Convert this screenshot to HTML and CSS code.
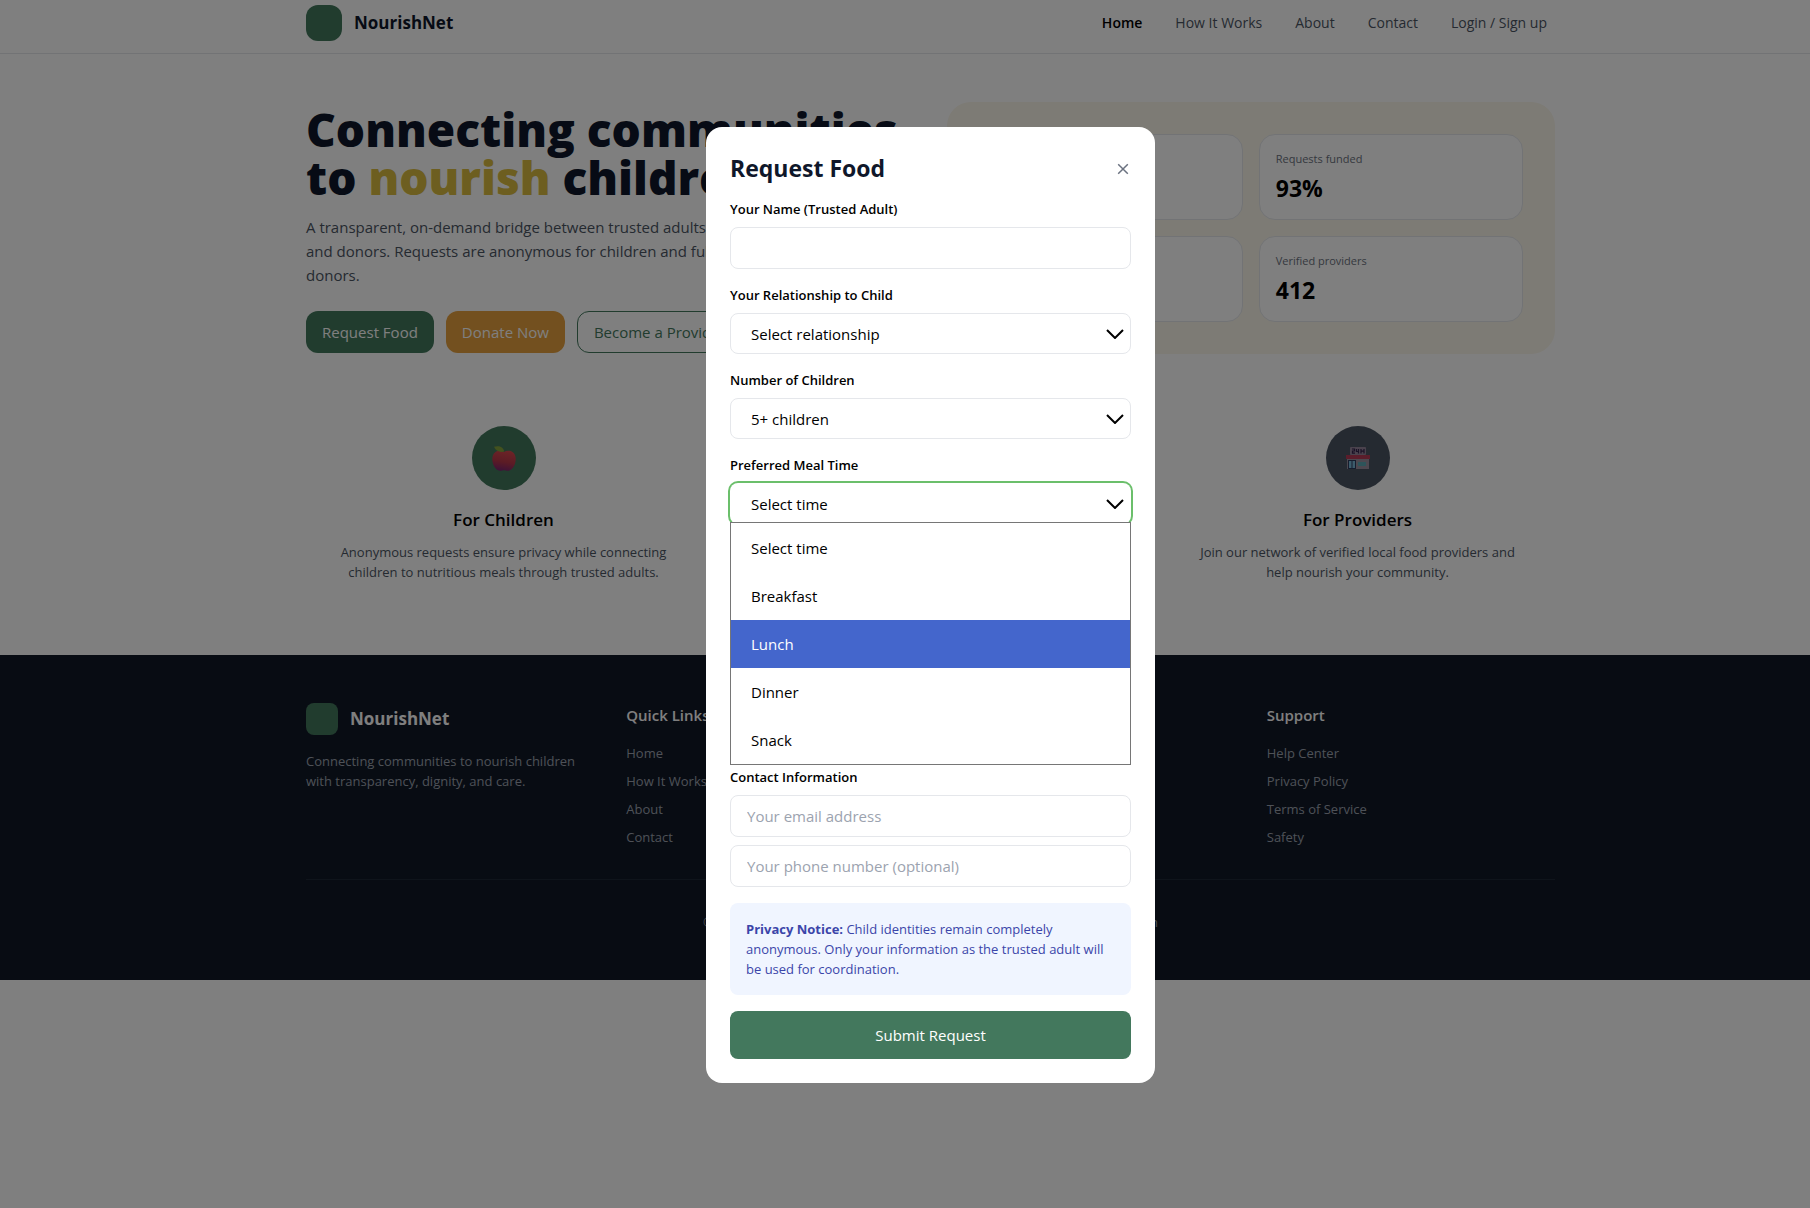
FILE: index.html
```html
<!DOCTYPE html>
<html lang="en">
<head>
<meta charset="utf-8">
<meta name="viewport" content="width=device-width, initial-scale=1">
<title>NourishNet</title>
<link rel="stylesheet" href="styles.css">
</head>
<body>
<header class="site-header">
  <div class="container header-row">
    <a class="brand" href="#"><span class="brand-mark"></span>NourishNet</a>
    <nav class="main-nav">
      <a class="active" href="#">Home</a>
      <a href="#">How It Works</a>
      <a href="#">About</a>
      <a href="#">Contact</a>
      <a href="#">Login / Sign up</a>
    </nav>
  </div>
</header>

<main class="site-main">
  <div class="container">
    <section class="hero">
      <div class="hero-copy">
        <h1>Connecting communities<br>to <span class="accent">nourish</span> children</h1>
        <p>A transparent, on-demand bridge between trusted adults, providers,<br>and donors. Requests are anonymous for children and fulfilled by<br>donors.</p>
        <div class="actions">
          <button type="button" class="btn btn-green">Request Food</button>
          <button type="button" class="btn btn-amber">Donate Now</button>
          <button type="button" class="btn btn-outline">Become a Provider</button>
        </div>
      </div>
      <div class="stats">
        <div class="stat"></div>
        <div class="stat"><span class="stat-label">Requests funded</span><span class="stat-value">93%</span></div>
        <div class="stat"></div>
        <div class="stat"><span class="stat-label">Verified providers</span><span class="stat-value">412</span></div>
      </div>
    </section>

    <section class="features">
      <article class="feature">
        <div class="feature-icon green">
          <svg width="24" height="25" viewBox="0 0 24 25" aria-hidden="true">
            <defs>
              <linearGradient id="apple" x1="0.6" y1="0" x2="0.4" y2="1">
                <stop offset="0" stop-color="#d8484e"/><stop offset="0.55" stop-color="#b8384a"/><stop offset="1" stop-color="#7c2470"/>
              </linearGradient>
            </defs>
            <path d="M12 6C9.500 4.400 5.800 4.500 3.200 6.300C.5 8.300-.2 12.200.6 16C1.500 20.600 4.400 24.800 8.300 24.800C9.900 24.800 10.600 24.300 12 24.300C13.400 24.300 14.100 24.800 15.700 24.800C19.600 24.800 22.500 20.600 23.400 16C24.200 12.200 23.500 8.300 20.800 6.300C18.200 4.500 14.500 4.400 12 6Z" fill="url(#apple)"/>
            <path d="M2 .8C6.500-.6 11.300.4 12.200 5.600C7.600 6.800 3.800 5 2 .8Z" fill="#86a43c"/>
          </svg>
        </div>
        <h2>For Children</h2>
        <p>Anonymous requests ensure privacy while connecting children to nutritious meals through trusted adults.</p>
      </article>
      <article class="feature feature-last">
        <div class="feature-icon slate">
          <svg width="24" height="24" viewBox="0 0 24 24" aria-hidden="true">
            <rect x="4" y="1" width="16" height="8" rx="1" fill="#94849a"/>
            <path d="M6 3h2.500v2H6.500v2.200H9M10.500 3v2.500H13M12.500 3v4.500M15 3v4.500M18 3v4.500M15 5.200h3" fill="none" stroke="#35224c" stroke-width="1.200"/>
            <rect x="1" y="12" width="22" height="11" fill="#9a90a0"/>
            <rect x="0" y="9" width="24" height="4" fill="#b43a56"/>
            <rect x="2" y="14" width="8" height="9" fill="#2c3a5c"/>
            <path d="M3 15h2.500v7H3zM6.500 15H9v7H6.500z" fill="#78b8d8"/>
            <rect x="12" y="16" width="8" height="4" fill="#5ca8b4"/>
          </svg>
        </div>
        <h2>For Providers</h2>
        <p>Join our network of verified local food providers and help nourish your community.</p>
      </article>
    </section>
  </div>
</main>

<footer class="site-footer">
  <div class="container">
    <div class="footer-cols">
      <div>
        <a class="brand footer-brand" href="#"><span class="brand-mark"></span>NourishNet</a>
        <p>Connecting communities to nourish children with transparency, dignity, and care.</p>
      </div>
      <nav>
        <h3>Quick Links</h3>
        <a href="#">Home</a>
        <a href="#">How It Works</a>
        <a href="#">About</a>
        <a href="#">Contact</a>
      </nav>
      <nav class="footer-last">
        <h3>Support</h3>
        <a href="#">Help Center</a>
        <a href="#">Privacy Policy</a>
        <a href="#">Terms of Service</a>
        <a href="#">Safety</a>
      </nav>
    </div>
    <p class="copyright">© 2025 NourishNet. All rights reserved. Made with care for all your children</p>
  </div>
</footer>

<div class="overlay">
  <div class="modal" role="dialog" aria-modal="true" aria-labelledby="modal-title">
    <div class="modal-head">
      <h2 id="modal-title">Request Food</h2>
      <button type="button" class="close" aria-label="Close">
        <svg width="12" height="12" viewBox="0 0 12 12" aria-hidden="true"><path d="M1.200 1.200l9.600 9.600M10.800 1.200l-9.600 9.600"/></svg>
      </button>
    </div>
    <form>
      <div class="field">
        <label for="name">Your Name (Trusted Adult)</label>
        <input id="name" type="text">
      </div>
      <div class="field">
        <label for="relationship">Your Relationship to Child</label>
        <div class="select">
          <select id="relationship"><option>Select relationship</option></select>
          <svg width="18" height="10" viewBox="0 0 18 10" aria-hidden="true"><path d="M1 1l8 8 8-8"/></svg>
        </div>
      </div>
      <div class="field">
        <label for="children">Number of Children</label>
        <div class="select">
          <select id="children"><option>5+ children</option></select>
          <svg width="18" height="10" viewBox="0 0 18 10" aria-hidden="true"><path d="M1 1l8 8 8-8"/></svg>
        </div>
      </div>
      <div class="field field-open">
        <label for="meal">Preferred Meal Time</label>
        <div class="select">
          <select id="meal" aria-controls="meal-list"><option>Select time</option></select>
          <svg width="18" height="10" viewBox="0 0 18 10" aria-hidden="true"><path d="M1 1l8 8 8-8"/></svg>
        </div>
        <ul class="options" id="meal-list" role="listbox" aria-label="Preferred Meal Time">
          <li role="option">Select time</li>
          <li role="option">Breakfast</li>
          <li role="option" class="highlight" aria-selected="true">Lunch</li>
          <li role="option">Dinner</li>
          <li role="option">Snack</li>
        </ul>
      </div>
      <div class="field">
        <label for="email">Contact Information</label>
        <input id="email" type="email" placeholder="Your email address">
        <input id="phone" type="tel" placeholder="Your phone number (optional)" aria-label="Phone number">
      </div>
      <p class="notice"><strong>Privacy Notice:</strong> Child identities remain completely anonymous. Only your information as the trusted adult will be used for coordination.</p>
      <button type="submit" class="submit">Submit Request</button>
    </form>
  </div>
</div>
</body>
</html>
```
FILE: styles.css
```css
:root {
  --green: #43785d;
  --ink: #0f172a;
  --border: #e5e7eb;
  --page-shift: 51px;
}

* { box-sizing: border-box; }

body {
  margin: 0;
  background: #fff;
  color: #000;
  font-family: "Segoe UI", "Open Sans", "Noto Sans", sans-serif;
  font-size: 15px;
  line-height: 24px;
}

h1, h2, h3, p, ul { margin: 0; padding: 0; }
a { color: inherit; text-decoration: none; }
button, input, select { font: inherit; color: inherit; }

.site-header, .site-main, .site-footer { padding-left: var(--page-shift); }

.container {
  max-width: 1281px;
  margin: 0 auto;
  padding: 0 16px;
}

/* Header */
.site-header { border-bottom: 1px solid var(--border); }
.header-row {
  display: flex;
  align-items: center;
  justify-content: space-between;
  padding-top: 5px;
  padding-bottom: 12px;
}
.brand {
  display: flex;
  align-items: center;
  gap: 12px;
  color: var(--ink);
  font-size: 17px;
  font-weight: 700;
}
.brand-mark {
  width: 36px;
  height: 36px;
  border-radius: 12px;
  background: var(--green);
}
.main-nav {
  display: flex;
  gap: 33px;
  padding-right: 8px;
  color: #4b5563;
  font-size: 14px;
}
.main-nav .active { color: #000; font-weight: 600; }

/* Hero */
.site-main { padding-bottom: 49px; }
.hero {
  display: grid;
  grid-template-columns: 1fr 1fr;
  gap: 32px;
  align-items: center;
  padding: 48px 0;
}
h1 {
  padding-top: 2px;
  color: var(--ink);
  font-size: 46px;
  font-weight: 800;
  line-height: 48px;
  white-space: nowrap;
}
.accent { color: #dabc40; }
.hero-copy p { margin-top: 14px; color: #4b5563; }
.actions { display: flex; gap: 12px; margin-top: 24px; }
.btn {
  height: 42px;
  padding: 0 16px;
  border: 0;
  border-radius: 12px;
  color: #fff;
}
.btn-green { background: var(--green); }
.btn-amber { background: #e6a03e; }
.btn-outline { border: 1px solid var(--green); background: none; color: var(--green); }
.stats {
  display: grid;
  grid-template-columns: 1fr 1fr;
  grid-auto-rows: 86px;
  gap: 16px;
  padding: 32px;
  border-radius: 24px;
  background: #faf6ea;
}
.stat {
  display: flex;
  flex-direction: column;
  gap: 5px;
  padding: 16px;
  border: 1px solid var(--border);
  border-radius: 16px;
  background: #fff;
}
.stat-label { color: #6b7280; font-size: 11px; line-height: 16px; }
.stat-value { font-size: 23px; font-weight: 700; line-height: 32px; }

/* Features */
.features {
  display: grid;
  grid-template-columns: repeat(3, 1fr);
  gap: 32px;
}
.feature { padding: 24px 32px; text-align: center; }
.feature-last { grid-column: 3; }
.feature-icon {
  display: grid;
  place-items: center;
  width: 64px;
  height: 64px;
  margin: 0 auto 16px;
  border-radius: 50%;
}
.green { background: var(--green); }
.slate { background: #4b5563; }
.feature h2 { font-size: 17px; font-weight: 600; line-height: 28px; }
.feature p { margin-top: 8px; color: #4b5563; font-size: 13px; line-height: 20px; }

/* Footer */
.site-footer {
  padding-top: 48px;
  padding-bottom: 48px;
  background: #111827;
  color: #9ca3af;
  font-size: 13px;
  line-height: 20px;
}
.footer-cols {
  display: grid;
  grid-template-columns: repeat(4, 1fr);
  gap: 32px;
  padding-bottom: 32px;
  border-bottom: 1px solid #1f2937;
}
.footer-last { grid-column: 4; }
.footer-brand { margin-bottom: 16px; color: #fff; }
.footer-brand .brand-mark { width: 32px; height: 32px; border-radius: 8px; }
.footer-cols nav { display: flex; flex-direction: column; gap: 8px; }
.footer-cols h3 {
  margin-bottom: 8px;
  color: #fff;
  font-size: 15px;
  font-weight: 600;
  line-height: 24px;
}
.copyright { margin-top: 32px; text-align: center; }

/* Modal */
.overlay {
  position: fixed;
  inset: 0;
  display: flex;
  align-items: center;
  justify-content: center;
  padding: 2px 0 0 var(--page-shift);
  background: rgba(0, 0, 0, 0.5);
}
.modal {
  width: 100%;
  max-width: 449px;
  padding: 24px;
  border-radius: 16px;
  background: #fff;
}
.modal-head {
  display: flex;
  align-items: center;
  justify-content: space-between;
  margin-bottom: 14px;
}
.modal-head h2 { color: var(--ink); font-size: 23px; font-weight: 700; line-height: 34px; }
.close {
  display: flex;
  padding: 4px 2px 2px;
  border: 0;
  background: none;
}
.close path { stroke: #6b7280; stroke-width: 1.500; }

.field { display: flex; flex-direction: column; gap: 8px; }
.field + .field { margin-top: 16px; }
.field-open + .field { margin-top: 2px; }
.field label { font-size: 13px; font-weight: 600; line-height: 20px; }
.field input, .field select {
  width: 100%;
  height: 42px;
  padding: 0 16px;
  border: 1px solid var(--border);
  border-radius: 8px;
  background: #fff;
  outline: 0;
}
.field input::placeholder { color: #9ca3af; opacity: 1; }

.select { display: grid; align-items: center; }
.select > * { grid-area: 1 / 1; }
.field select { height: 41px; padding: 0 20px; appearance: none; }
.select svg { justify-self: end; margin-right: 7px; pointer-events: none; }
.select path { fill: none; stroke: #000; stroke-width: 2; }
.field-open select { border-color: transparent; box-shadow: 0 0 0 2px #6bbf6b; }

.options {
  position: relative;
  margin-top: -10px;
  padding-top: 1px;
  border: 1px solid #767676;
  background: #fff;
  list-style: none;
}
.options li { padding: 0 20px; line-height: 48px; }
.options .highlight { background: #4466cc; color: #fff; }

.notice {
  margin: 16px 0;
  padding: 16px;
  border-radius: 8px;
  background: #f0f5ff;
  color: #3b45a9;
  font-size: 13px;
  line-height: 20px;
}
.submit {
  width: 100%;
  height: 48px;
  border: 0;
  border-radius: 8px;
  background: var(--green);
  color: #fff;
}
```
